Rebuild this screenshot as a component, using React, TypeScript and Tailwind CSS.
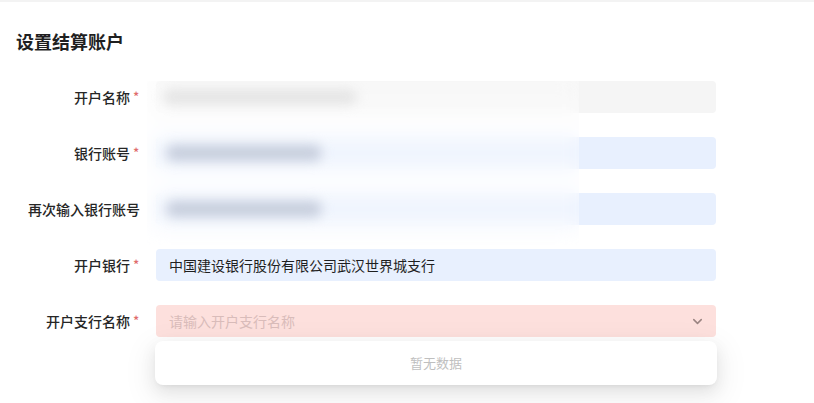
import React from "react";
import { ChevronDown } from "lucide-react";

const font = { fontFamily: '"Noto Sans CJK SC", "Noto Sans", sans-serif' };

function Label({ text, required }: { text: string; required?: boolean }) {
  return (
    <div className="w-[140px] h-[32px] shrink-0 flex items-center justify-end text-[14px] font-medium text-[#262626]">
      <span>{text}</span>
      {required && <span className="ml-[3px] w-[7px] text-[#e06c6c] text-[13px]">*</span>}
    </div>
  );
}

export default function App() {
  return (
    <div style={font} className="w-[814px] h-[403px] bg-white border-t-2 border-[#f3f3f3] overflow-hidden">
      <div className="pl-[16px] pt-[27px] text-[18px] font-bold text-[#1f1f1f] leading-[24px]">设置结算账户</div>
      <div className="relative mt-[28px] flex flex-col gap-[24px]">
        <div className="flex items-center h-[32px] gap-[16px]">
          <Label text="开户名称" required />
          <div className="w-[560px] h-[32px] rounded-[4px] bg-[#f5f5f5]" />
        </div>
        <div className="flex items-center h-[32px] gap-[16px]">
          <Label text="银行账号" required />
          <div className="w-[560px] h-[32px] rounded-[4px] bg-[#e8f0fe]" />
        </div>
        <div className="flex items-center h-[32px] gap-[16px]">
          <Label text="再次输入银行账号" />
          <div className="w-[560px] h-[32px] rounded-[4px] bg-[#e8f0fe]" />
        </div>
        <div className="flex items-center h-[32px] gap-[16px]">
          <Label text="开户银行" required />
          <div className="w-[560px] h-[32px] rounded-[4px] bg-[#e8f0fe] flex items-center px-[13px] text-[14px] text-[#1f1f1f]">
            中国建设银行股份有限公司武汉世界城支行
          </div>
        </div>
        <div className="flex items-start gap-[16px]">
          <Label text="开户支行名称" required />
          <div className="w-[560px] flex flex-col">
            <div className="h-[32px] rounded-[4px] bg-[#fde0dd] flex items-center justify-between pl-[13px] pr-[11px] text-[14px]">
              <span className="text-[#d9bcba]">请输入开户支行名称</span>
              <ChevronDown size={15} strokeWidth={2.4} color="#9a8482" />
            </div>
            <div className="mt-[4px] -mx-[1px] h-[44px] rounded-[8px] bg-white flex items-center justify-center text-[13px] text-[#bfbfbf] shadow-[0_6px_16px_0_rgba(0,0,0,0.08),0_3px_6px_-4px_rgba(0,0,0,0.12),0_9px_28px_8px_rgba(0,0,0,0.05)]">
              暂无数据
            </div>
          </div>
        </div>
        <div className="absolute left-[147px] top-0 w-[432px] h-[164px] bg-white/30 backdrop-blur-[10px] overflow-hidden">
          <div className="absolute left-[16px] top-[9px] w-[194px] h-[14px] rounded-full bg-[#e3e3e3] blur-[6px]" />
          <div className="absolute left-[19px] top-[64px] w-[156px] h-[16px] rounded-full bg-[#c6cddc] blur-[6px]" />
          <div className="absolute left-[19px] top-[120px] w-[156px] h-[16px] rounded-full bg-[#c6cddc] blur-[6px]" />
        </div>
      </div>
    </div>
  );
}
